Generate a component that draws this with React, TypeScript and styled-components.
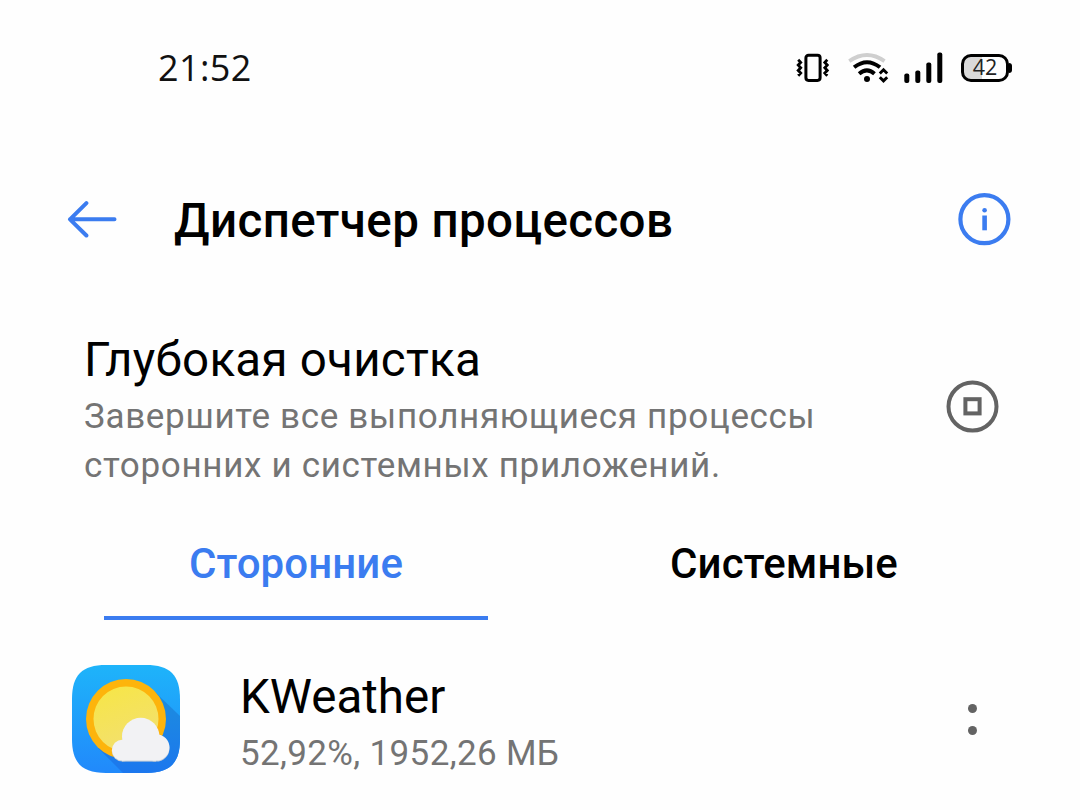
import { useState } from "react";
import styled, { createGlobalStyle } from "styled-components";

const BLUE = "#3b7cf0";
const GREY = "#747474";

const apps = [{ name: "KWeather", usage: "52,92%, 1952,26 МБ" }];
const tabs = ["Сторонние", "Системные"];

const App = () => {
  const [active, setActive] = useState(0);
  return (
    <Screen>
      <GlobalStyle />
      <StatusBar>
        <Clock>21:52</Clock>
        <StatusIcons>
          <VibrateIcon />
          <WifiIcon />
          <SignalIcon />
          <Battery>
            <BatteryBody>42</BatteryBody>
            <BatteryTip />
          </Battery>
        </StatusIcons>
      </StatusBar>
      <AppBar>
        <BackIcon />
        <Title>Диспетчер процессов</Title>
        <InfoIcon />
      </AppBar>
      <Cleanup>
        <div>
          <CleanupTitle>Глубокая очистка</CleanupTitle>
          <CleanupText>
            Завершите все выполняющиеся процессы
            <br />
            сторонних и системных приложений.
          </CleanupText>
        </div>
        <StopIcon />
      </Cleanup>
      <Tabs>
        {tabs.map((label, i) => (
          <Tab key={label} $active={i === active} onClick={() => setActive(i)}>
            {label}
          </Tab>
        ))}
      </Tabs>
      {apps.map((app) => (
        <AppRow key={app.name}>
          <WeatherIcon />
          <AppInfo>
            <AppName>{app.name}</AppName>
            <AppUsage>{app.usage}</AppUsage>
          </AppInfo>
          <Menu>
            <Dot />
            <Dot />
          </Menu>
        </AppRow>
      ))}
    </Screen>
  );
};

const VibrateIcon = () => (
  <svg width="34" height="30" viewBox="0 0 34 30" fill="none" stroke="#000">
    <rect x="9.9" y="2.2" width="14.2" height="25.2" rx="2.6" strokeWidth="3" />
    <path
      d="M2.2 6.8l2.5 2.6-2.5 2.7 2.5 2.7-2.5 2.7 2.5 2.6-2.5 2.6M31.3 6.8l-2.5 2.6 2.5 2.7-2.5 2.7 2.5 2.7-2.5 2.6 2.5 2.6"
      strokeWidth="2.8"
    />
  </svg>
);

const WifiIcon = () => (
  <svg width="42" height="32" viewBox="-1.5 -0.5 42 32" fill="none" stroke="#000">
    <path d="M.8 8.6Q18.5-3.6 36 8.6" stroke="#cfcfcf" strokeWidth="3.8" />
    <path d="M5.6 14.8Q18.5 4.6 31.5 14.8" strokeWidth="4" />
    <path d="M10.6 21.2Q18.5 14.6 26 21.2" strokeWidth="4" />
    <circle cx="18.5" cy="26.4" r="3" fill="#000" stroke="none" />
    <path d="M31.3 21l3.7-3.700 3.700 3.700M31.300 24.700l3.700 3.700 3.700-3.700" strokeWidth="2.9" />
  </svg>
);

const SignalIcon = () => (
  <svg width="40" height="32" viewBox="0.7 0 40 32">
    <rect x="1" y="21.5" width="5" height="9.5" rx="2" />
    <rect x="12" y="18.5" width="5" height="12.5" rx="2" />
    <rect x="23" y="10.5" width="5" height="20.5" rx="2" />
    <rect x="34" y="0.5" width="5" height="30.5" rx="2" />
  </svg>
);

const BackIcon = () => (
  <svg width="50" height="38" viewBox="0 0 50 38" fill="none" stroke={BLUE} strokeWidth="4">
    <path d="M3 19.3H47.5M19.4 3.1L3 19.3l16.4 16.2" strokeLinecap="round" strokeLinejoin="round" />
  </svg>
);

const InfoIcon = () => (
  <svg width="54" height="54" viewBox="0 0 54 54">
    <circle cx="27.4" cy="27.2" r="24" fill="none" stroke={BLUE} strokeWidth="4.2" />
    <circle cx="27.6" cy="18.3" r="2.3" fill={BLUE} />
    <rect x="25.3" y="23.5" width="4.6" height="14.8" fill={BLUE} />
  </svg>
);

const StopIcon = () => (
  <svg width="54" height="54" viewBox="0 0 54 54" fill="none" stroke="#636363">
    <circle cx="27.5" cy="26.5" r="24" strokeWidth="4" />
    <rect x="20.4" y="19.2" width="14.2" height="14.2" strokeWidth="4" />
  </svg>
);

const WeatherIcon = () => (
  <svg width="108" height="108" viewBox="0 0 108 108">
    <defs>
      <linearGradient id="sky" x1="0" y1="0" x2="0" y2="1">
        <stop offset="0" stopColor="#1eb4fa" />
        <stop offset="1" stopColor="#2189fb" />
      </linearGradient>
      <linearGradient id="sun" x1="0" y1="0" x2="0.4" y2="1">
        <stop offset="0" stopColor="#f7e645" />
        <stop offset="1" stopColor="#f3e06e" />
      </linearGradient>
      <linearGradient id="shade" x1="0" y1="0" x2="0" y2="1">
        <stop offset="0" stopColor="#1c8ede" />
        <stop offset="1" stopColor="#1c77ee" />
      </linearGradient>
      <clipPath id="tile">
        <path d="M34 0H74C98 0 108 10 108 34V74C108 98 98 108 74 108H34C10 108 0 98 0 74V34C0 10 10 0 34 0Z" />
      </clipPath>
      <g id="cloud">
        <circle cx="68.7" cy="71.5" r="18.7" />
        <circle cx="50.3" cy="85.2" r="10.4" />
        <circle cx="84.2" cy="82.4" r="13.2" />
        <rect x="50" y="75" width="34" height="20.6" />
      </g>
    </defs>
    <g clipPath="url(#tile)">
      <rect width="108" height="108" fill="url(#sky)" />
      <path d="M82 26L108 51V108H51L26 83Z" fill="url(#shade)" />
      <circle cx="54" cy="54" r="40" fill="#fdb40c" />
      <circle cx="54" cy="54" r="32.5" fill="url(#sun)" />
      <use href="#cloud" y="1" fill="#c5ccd4" />
      <use href="#cloud" fill="#f2f2f4" />
    </g>
  </svg>
);

const GlobalStyle = createGlobalStyle`
  body {
    margin: 0;
    background: #fefefe;
  }
`;

const Screen = styled.div`
  width: 1080px;
  height: 810px;
  overflow: hidden;
  font-family: Roboto, "Noto Sans", sans-serif;
  color: #000;
`;

const StatusBar = styled.div`
  display: flex;
  justify-content: space-between;
  align-items: center;
  height: 136px;
  padding: 0 68px 0 158px;
`;

const Clock = styled.div`
  font-family: "Open Sans", sans-serif;
  font-size: 36px;
  line-height: 50px;
  letter-spacing: 0.4px;
  color: #111;
`;

const StatusIcons = styled.div`
  display: flex;
  align-items: center;
  gap: 17px;

  svg + svg + svg {
    margin-left: -2px;
  }
`;

const Battery = styled.div`
  display: flex;
  align-items: center;
`;

const BatteryBody = styled.div`
  box-sizing: border-box;
  width: 48px;
  height: 28px;
  border: 3px solid #000;
  border-radius: 10px;
  background: linear-gradient(90deg, #d9d9d9 42%, #fefefe 42%);
  font: 400 21.5px/20px "Open Sans", sans-serif;
  color: #222;
  text-align: center;
`;

const BatteryTip = styled.div`
  width: 3px;
  height: 10px;
  border-radius: 0 3px 3px 0;
  background: #000;
`;

const AppBar = styled.header`
  display: flex;
  align-items: center;
  height: 166px;
  padding: 0 69px 0 67px;
`;

const Title = styled.h1`
  flex: 1;
  margin: 3px 0 0 57px;
  font-size: 47.5px;
  font-weight: 500;
  line-height: 56px;
  letter-spacing: 0.4px;
`;

const Cleanup = styled.section`
  display: flex;
  justify-content: space-between;
  align-items: center;
  height: 158px;
  padding: 29px 81px 0 84px;

  svg {
    margin-bottom: 7px;
  }
`;

const CleanupTitle = styled.h2`
  margin: 1px 0 4px;
  font-size: 47.5px;
  font-weight: 400;
  line-height: 56px;
  letter-spacing: 0.25px;
`;

const CleanupText = styled.p`
  margin: 0;
  font-size: 35px;
  line-height: 49px;
  letter-spacing: 0.68px;
  color: ${GREY};
`;

const Tabs = styled.nav`
  display: flex;
  padding: 36px 52px 0;
`;

const Tab = styled.button<{ $active: boolean }>`
  flex: 1;
  height: 95px;
  margin: 0 52px;
  padding: 0 0 14px;
  border: 0;
  border-bottom: 4px solid ${(props) => (props.$active ? BLUE : "transparent")};
  background: none;
  color: ${(props) => (props.$active ? BLUE : "#000")};
  font: 500 42px/56px Roboto, sans-serif;
  letter-spacing: 0.1px;
`;

const AppRow = styled.div`
  display: flex;
  align-items: center;
  height: 108px;
  padding: 45px 103px 0 72px;
`;

const AppInfo = styled.div`
  flex: 1;
  margin-left: 60px;
  padding-top: 8px;
`;

const AppName = styled.div`
  font-size: 47.5px;
  line-height: 56px;
`;

const AppUsage = styled.div`
  margin-top: 4px;
  font-size: 35px;
  line-height: 49px;
  letter-spacing: 0.35px;
  color: ${GREY};
`;

const Menu = styled.div`
  display: flex;
  flex-direction: column;
  gap: 13px;
`;

const Dot = styled.span`
  width: 9px;
  height: 9px;
  border-radius: 50%;
  background: #636363;
`;

export default App;
